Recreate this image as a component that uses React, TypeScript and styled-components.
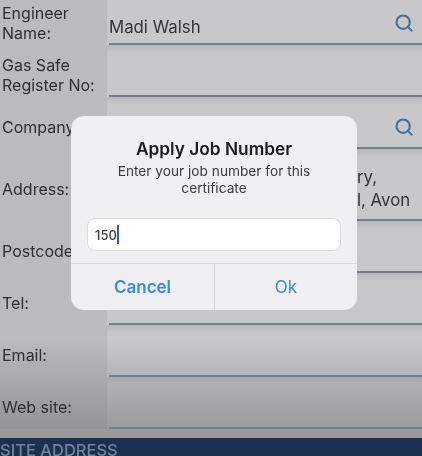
import * as React from 'react';
import styled, {createGlobalStyle} from 'styled-components';
import {Search} from 'lucide-react';

const GlobalStyle = createGlobalStyle`
  html, body {
    margin: 0;
    padding: 0;
    background: #c8c7ca;
  }
  body {
    font-family: Inter, "Liberation Sans", sans-serif;
  }
`;

const Screen = styled.div`
  position: relative;
  width: 422px;
  height: 456px;
  overflow: hidden;
  filter: blur(0.45px);
`;

const Form = styled.div`
  display: flex;
  flex-direction: column;
  height: 463px;
  margin-top: -7px;
  background: linear-gradient(#c8c7ca 0, #c8c7ca 345px, #979698 444px);
`;

const Row = styled.div<{ $height?: number }>`
  display: grid;
  grid-template-columns: 107px 1fr;
  height: ${props => props.$height || 52}px;
  flex: none;
`;

const Label = styled.div`
  background: rgba(95, 95, 100, 0.12);
  color: #2f2f31;
  font-size: 16px;
  line-height: 20px;
  padding: 8px 0 0 2px;
  display: flex;
  align-items: center;
  white-space: pre-line;
`;

const Field = styled.div`
  display: flex;
  align-items: flex-end;
  justify-content: space-between;
  padding: 0 8px 6px 2px;
  position: relative;
  color: #333335;
  font-size: 16.8px;

  &::before {
    content: '';
    position: absolute;
    left: 0;
    right: 0;
    top: 0;
    height: 8px;
    background: linear-gradient(rgba(150, 155, 165, 0.35), rgba(150, 155, 165, 0));
  }

  &::after {
    content: '';
    position: absolute;
    left: 2px;
    right: 0;
    bottom: 0;
    height: 2px;
    background: #727d8c;
  }
`;

const FieldValue = styled.span`
  white-space: pre-line;
  line-height: 23px;
`;

const AddressValue = styled(FieldValue)`
  margin-left: 248px;
  margin-bottom: 3px;
`;

const SearchIcon = styled(Search)`
  width: 20px;
  height: 20px;
  stroke-width: 2.5px;
  color: #416f9c;
  margin: 0 0 6px auto;
`;

const SectionHeader = styled.div`
  flex: 1;
  background: #1b2f4f;
  color: #71839d;
  font-size: 16.5px;
  font-weight: 500;
  line-height: 19px;
  padding: 3px 0 0 0;
  margin-top: 9px;
  text-transform: uppercase;
  overflow: hidden;
`;

const Dialog = styled.div`
  position: absolute;
  left: 71px;
  top: 116px;
  width: 286px;
  height: 194px;
  border-radius: 13px;
  background: #f0f0f2;
  display: flex;
  flex-direction: column;
  overflow: hidden;
`;

const DialogBody = styled.div`
  flex: 1;
  display: flex;
  flex-direction: column;
  align-items: center;
  padding: 23px 16px 0;
`;

const DialogTitle = styled.div`
  font-size: 17.3px;
  font-weight: 600;
  line-height: 20px;
  color: #1b1b1d;
  white-space: nowrap;
`;

const DialogMessage = styled.div`
  font-size: 13.7px;
  line-height: 17px;
  color: #3c3c3e;
  text-align: center;
  margin-top: 4px;
  width: 220px;
`;

const JobInput = styled.div`
  align-self: stretch;
  height: 31px;
  margin-top: 21px;
  background: #fff;
  border: 1px solid #dcdcde;
  border-radius: 8px;
  display: flex;
  align-items: center;
  padding-left: 7px;
  font-size: 13px;
  font-weight: 500;
  color: #3c3c3e;
`;

const Caret = styled.span`
  display: inline-block;
  width: 2px;
  height: 19px;
  background: #3c55b0;
`;

const DialogActions = styled.div`
  height: 46px;
  flex: none;
  display: grid;
  grid-template-columns: 143px 1fr;
  border-top: 1px solid #d8d8da;
`;

const DialogButton = styled.div<{ $bold?: boolean }>`
  display: flex;
  align-items: center;
  justify-content: center;
  color: #378ae8;
  font-size: 17px;
  font-weight: ${props => props.$bold ? 600 : 400};
  & + & {
    border-left: 1px solid #d8d8da;
  }
`;

export default function App() {
    return (
        <Screen>
            <GlobalStyle/>
            <Form>
                <Row>
                    <Label>{'Engineer\nName:'}</Label>
                    <Field><FieldValue>Madi Walsh</FieldValue><SearchIcon/></Field>
                </Row>
                <Row>
                    <Label>{'Gas Safe\nRegister No:'}</Label>
                    <Field/>
                </Row>
                <Row>
                    <Label>Company</Label>
                    <Field><SearchIcon/></Field>
                </Row>
                <Row $height={72}>
                    <Label>Address:</Label>
                    <Field><AddressValue>{'ry,\nl, Avon'}</AddressValue></Field>
                </Row>
                <Row>
                    <Label>Postcode</Label>
                    <Field/>
                </Row>
                <Row>
                    <Label>Tel:</Label>
                    <Field/>
                </Row>
                <Row>
                    <Label>Email:</Label>
                    <Field/>
                </Row>
                <Row>
                    <Label>Web site:</Label>
                    <Field/>
                </Row>
                <SectionHeader>Site Address</SectionHeader>
            </Form>
            <Dialog>
                <DialogBody>
                    <DialogTitle>Apply Job Number</DialogTitle>
                    <DialogMessage>Enter your job number for this certificate</DialogMessage>
                    <JobInput>150<Caret/></JobInput>
                </DialogBody>
                <DialogActions>
                    <DialogButton $bold>Cancel</DialogButton>
                    <DialogButton>Ok</DialogButton>
                </DialogActions>
            </Dialog>
        </Screen>
    );
}
